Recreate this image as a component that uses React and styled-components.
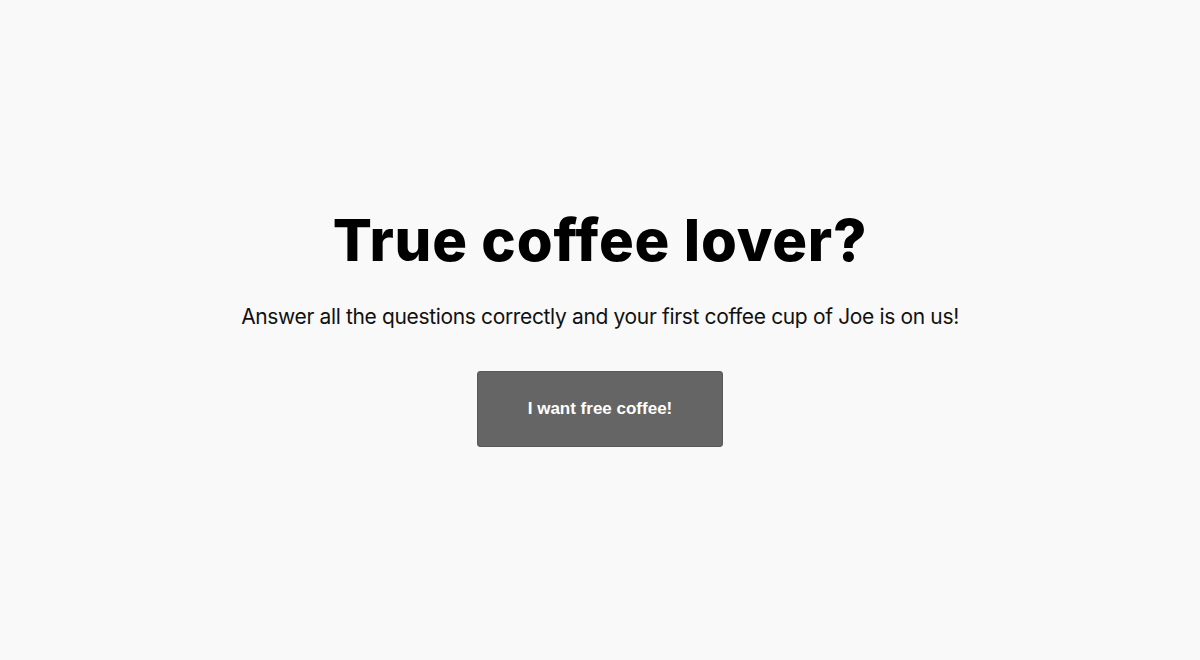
import React from "react";
import styled, { createGlobalStyle } from "styled-components";

const Global = createGlobalStyle`
  html, body { margin: 0; padding: 0; background: #f9f9f9; }
  * { box-sizing: border-box; }
`;

const Page = styled.main`
  height: 660px;
  padding-bottom: 8px;
  display: flex;
  flex-direction: column;
  align-items: center;
  justify-content: center;
  font-family: Inter, "Noto Sans", sans-serif;
  color: #000;
`;

const Title = styled.h1`
  margin: 0;
  font-family: Inter, sans-serif;
  font-weight: 800;
  font-size: 58px;
  line-height: 70px;
  letter-spacing: 0.8px;
  color: #000;
`;

const Lead = styled.p`
  margin: 27px 0 0;
  font-family: Inter, sans-serif;
  font-weight: 400;
  font-size: 21px;
  line-height: 30px;
  letter-spacing: -0.35px;
  color: #111;
`;

const CtaButton = styled.button`
  margin-top: 39px;
  width: 246px;
  height: 76px;
  border: 1px solid #5a5a5a;
  border-radius: 3px;
  background: #656565;
  color: #fff;
  font-family: "Liberation Sans", Arial, sans-serif;
  font-weight: 700;
  font-size: 17px;
  cursor: pointer;
`;

export default function App() {
  return (
    <>
      <Global />
      <Page>
        <Title>True coffee lover?</Title>
        <Lead>Answer all the questions correctly and your first coffee cup of Joe is on us!</Lead>
        <CtaButton>I want free coffee!</CtaButton>
      </Page>
    </>
  );
}
